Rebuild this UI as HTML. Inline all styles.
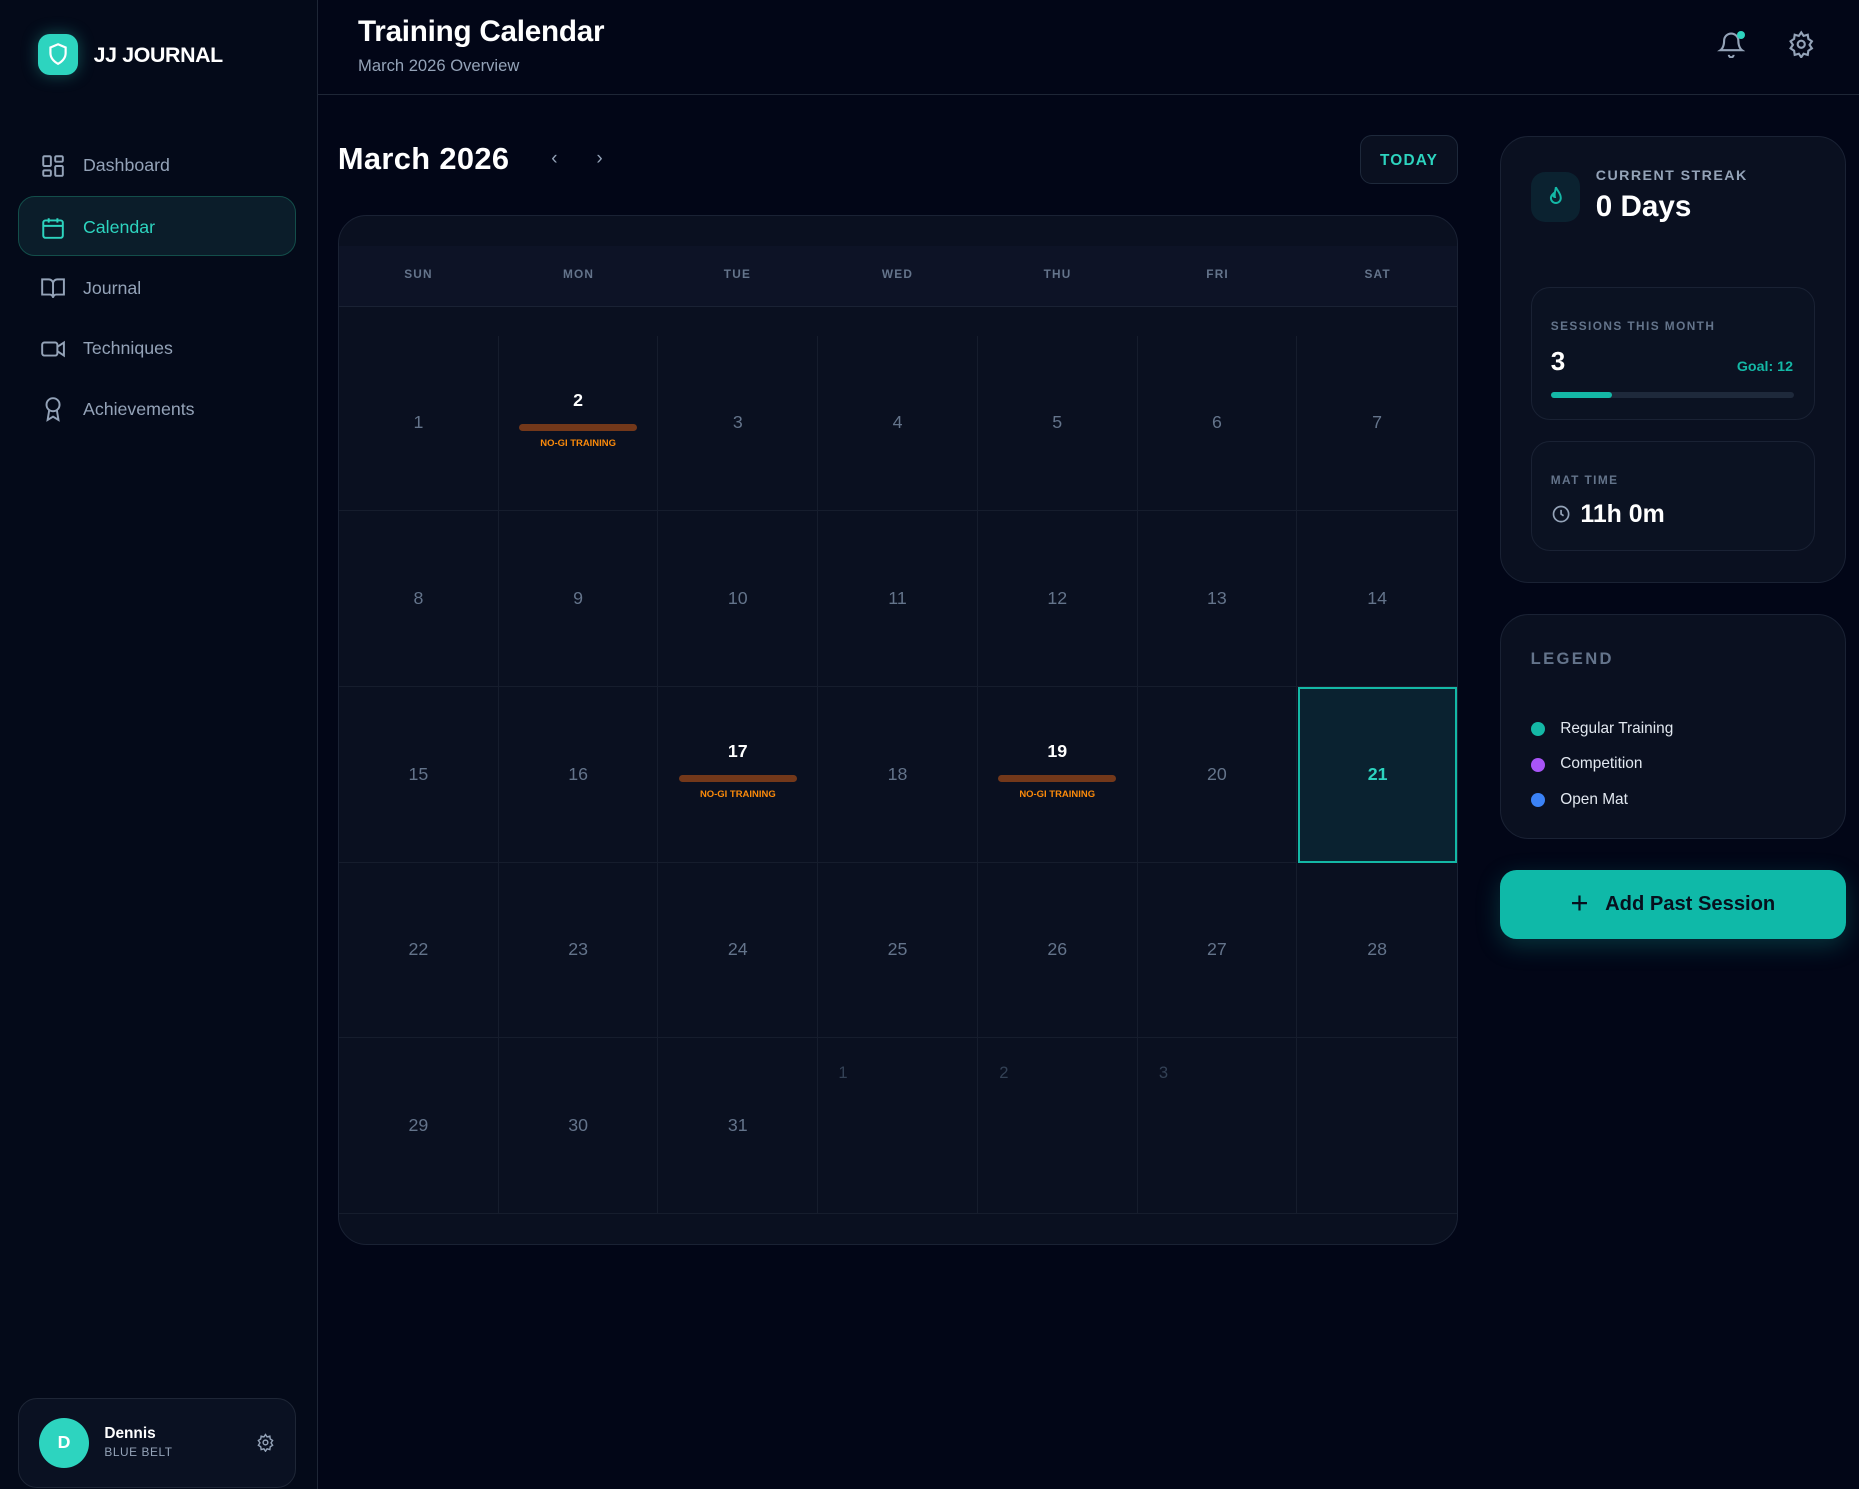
<!DOCTYPE html>
<html><head><meta charset="utf-8"><style>
*{box-sizing:border-box;margin:0;padding:0}
html,body{width:1859px;height:1489px;overflow:hidden;background:#020617}
#w{zoom:1.18559;width:1568px;height:1256px;position:relative;font-family:"Liberation Sans",sans-serif;color:#fff;background:#020617}
.a{position:absolute}
.side{left:0;top:0;width:268px;height:1256px;background:#040a19;border-right:1px solid #1e2636}
.nav{left:34px;display:flex;align-items:center;gap:14px;font-size:15px;color:#94a3b8;height:24px}
.nav svg{width:22px;height:22px;flex:none}
.card{background:#0a1020;border:1px solid #1a2234}
.cell{position:absolute;width:134.7px;height:148.2px;border-right:1px solid #161d2d;border-bottom:1px solid #161d2d;display:flex;align-items:center;justify-content:center;font-size:15px;color:#64748b}
.ev{flex-direction:column}
.ev b{color:#fff;font-size:15px;margin-top:-6px}
.ev i{display:block;width:100px;height:6px;border-radius:3px;background:#73381a;margin-top:11px}
.ev span{font-size:8px;font-weight:bold;color:#fb8a0a;margin-top:6px}
.dn{position:absolute;top:231px;font-size:10px;font-weight:bold;letter-spacing:1px;color:#64748b;transform:translate(-50%,-50%)}
.lbl{font-size:10px;font-weight:bold;letter-spacing:1.2px;color:#64748b}
</style></head><body><div id="w">
<div class="a side"></div>
<div class="a" style="left:32px;top:29px;width:34px;height:34px;border-radius:10px;background:#2dd4bf;box-shadow:0 0 14px rgba(45,212,191,.35)"></div>
<svg class="a" style="left:38px;top:35px" width="22" height="22" viewBox="0 0 24 24" fill="none" stroke="#fff" stroke-width="2"><path d="M12 3l7 3v5c0 5-3.5 8-7 10-3.5-2-7-5-7-10V6z"/></svg>
<div class="a" style="left:79px;top:36px;font-size:18px;font-weight:bold;letter-spacing:-.3px">JJ JOURNAL</div>
<div class="a nav" style="top:128px"><svg viewBox="0 0 24 24" fill="none" stroke="#94a3b8" stroke-width="1.8"><rect x="3" y="3" width="7" height="9" rx="1"/><rect x="14" y="3" width="7" height="5" rx="1"/><rect x="14" y="12" width="7" height="9" rx="1"/><rect x="3" y="16" width="7" height="5" rx="1"/></svg>Dashboard</div>
<div class="a" style="left:15px;top:165px;width:235px;height:51px;border-radius:14px;background:#0b1d2a;border:1px solid #134e4a"></div>
<div class="a nav" style="top:180px;color:#2dd4bf"><svg viewBox="0 0 24 24" fill="none" stroke="#2dd4bf" stroke-width="1.8"><rect x="3" y="5" width="18" height="16" rx="2"/><path d="M3 10h18M8 3v4M16 3v4"/></svg>Calendar</div>
<div class="a nav" style="top:231px"><svg viewBox="0 0 24 24" fill="none" stroke="#94a3b8" stroke-width="1.8"><path d="M2 4h6a4 4 0 014 4v13a3 3 0 00-3-3H2zM22 4h-6a4 4 0 00-4 4v13a3 3 0 013-3h7z"/></svg>Journal</div>
<div class="a nav" style="top:282px"><svg viewBox="0 0 24 24" fill="none" stroke="#94a3b8" stroke-width="1.8"><rect x="2" y="6" width="14" height="12" rx="2"/><path d="M16 10l6-4v12l-6-4"/></svg>Techniques</div>
<div class="a nav" style="top:333px"><svg viewBox="0 0 24 24" fill="none" stroke="#94a3b8" stroke-width="1.8"><circle cx="12" cy="8" r="6"/><path d="M8.5 13L7 22l5-3 5 3-1.5-9"/></svg>Achievements</div>
<div class="a" style="left:15px;top:1179px;width:235px;height:76px;border-radius:16px;background:#0a1122;border:1px solid #1e2636"></div>
<div class="a" style="left:33px;top:1196px;width:42px;height:42px;border-radius:50%;background:#2dd4bf;color:#fff;font-weight:bold;font-size:15px;display:flex;align-items:center;justify-content:center">D</div>
<div class="a" style="left:88px;top:1202px;font-size:13px;font-weight:bold">Dennis</div>
<div class="a" style="left:88px;top:1219px;font-size:10px;color:#94a3b8;letter-spacing:.5px">BLUE BELT</div>
<svg class="a" style="left:216px;top:1209px" width="16" height="16" viewBox="0 0 24 24" fill="none" stroke="#94a3b8" stroke-width="1.8"><circle cx="12" cy="12" r="3"/><path d="M12 2l2 3 3.5-1 .5 3.5 3 2-2 3 2 3-3 2-.5 3.5-3.5-1-2 3-2-3-3.5 1-.5-3.5-3-2 2-3-2-3 3-2 .5-3.5 3.5 1z"/></svg>

<div class="a" style="left:268px;top:79px;width:1300px;height:1px;background:#1e2636"></div>
<div class="a" style="left:302px;top:13px;font-size:25px;font-weight:bold;letter-spacing:-.2px">Training Calendar</div>
<div class="a" style="left:302px;top:47px;font-size:14px;color:#94a3b8">March 2026 Overview</div>
<svg class="a" style="left:1448px;top:25px" width="24" height="24" viewBox="0 0 24 24" fill="none" stroke="#94a3b8" stroke-width="1.8"><path d="M6 9a6 6 0 0112 0c0 6 3 8 3 8H3s3-2 3-8M10 21a2 2 0 004 0"/></svg>
<div class="a" style="left:1465px;top:26px;width:7px;height:7px;border-radius:50%;background:#2dd4bf"></div>
<svg class="a" style="left:1507px;top:25px" width="24" height="24" viewBox="0 0 24 24" fill="none" stroke="#94a3b8" stroke-width="1.8"><circle cx="12" cy="12" r="3"/><path d="M12 2l2 3 3.5-1 .5 3.5 3 2-2 3 2 3-3 2-.5 3.5-3.5-1-2 3-2-3-3.5 1-.5-3.5-3-2 2-3-2-3 3-2 .5-3.5 3.5 1z"/></svg>

<div class="a" style="left:285px;top:119px;font-size:26px;font-weight:bold;letter-spacing:.3px">March 2026</div>
<div class="a" style="left:465px;top:125px;font-size:16px;color:#94a3b8">&#8249;</div>
<div class="a" style="left:503px;top:125px;font-size:16px;color:#94a3b8">&#8250;</div>
<div class="a" style="left:1147px;top:114px;width:83px;height:41px;border-radius:10px;border:1px solid #1e293b;background:#0a1020;color:#2dd4bf;font-size:13px;font-weight:bold;letter-spacing:1px;display:flex;align-items:center;justify-content:center;padding-top:2px">TODAY</div>

<div class="a card" style="left:285px;top:181px;width:945px;height:869px;border-radius:24px;overflow:hidden">
<div class="a" style="left:0;top:26px;width:945px;height:51px;background:#0d1326;border-bottom:1px solid #1a2234"></div>
</div>
<div class="dn" style="left:353px">SUN</div><div class="dn" style="left:488px">MON</div><div class="dn" style="left:622px">TUE</div><div class="dn" style="left:757px">WED</div><div class="dn" style="left:892px">THU</div><div class="dn" style="left:1027px">FRI</div><div class="dn" style="left:1162px">SAT</div>

<div class="cell" style="left:286px;top:283px">1</div>
<div class="cell ev" style="left:420.7px;top:283px"><b>2</b><i></i><span>NO-GI TRAINING</span></div>
<div class="cell" style="left:555.4px;top:283px">3</div>
<div class="cell" style="left:690.1px;top:283px">4</div>
<div class="cell" style="left:824.8px;top:283px">5</div>
<div class="cell" style="left:959.5px;top:283px">6</div>
<div class="cell" style="left:1094.2px;top:283px;border-right:none">7</div>
<div class="cell" style="left:286px;top:431.2px">8</div>
<div class="cell" style="left:420.7px;top:431.2px">9</div>
<div class="cell" style="left:555.4px;top:431.2px">10</div>
<div class="cell" style="left:690.1px;top:431.2px">11</div>
<div class="cell" style="left:824.8px;top:431.2px">12</div>
<div class="cell" style="left:959.5px;top:431.2px">13</div>
<div class="cell" style="left:1094.2px;top:431.2px;border-right:none">14</div>
<div class="cell" style="left:286px;top:579.4px">15</div>
<div class="cell" style="left:420.7px;top:579.4px">16</div>
<div class="cell ev" style="left:555.4px;top:579.4px"><b>17</b><i></i><span>NO-GI TRAINING</span></div>
<div class="cell" style="left:690.1px;top:579.4px">18</div>
<div class="cell ev" style="left:824.8px;top:579.4px"><b>19</b><i></i><span>NO-GI TRAINING</span></div>
<div class="cell" style="left:959.5px;top:579.4px">20</div>
<div class="cell" style="left:1095px;top:579.4px;width:134px;border:2px solid #14b8a6;background:#0a2230;color:#2dd4bf;font-weight:bold">21</div>
<div class="cell" style="left:286px;top:727.6px">22</div>
<div class="cell" style="left:420.7px;top:727.6px">23</div>
<div class="cell" style="left:555.4px;top:727.6px">24</div>
<div class="cell" style="left:690.1px;top:727.6px">25</div>
<div class="cell" style="left:824.8px;top:727.6px">26</div>
<div class="cell" style="left:959.5px;top:727.6px">27</div>
<div class="cell" style="left:1094.2px;top:727.6px;border-right:none">28</div>
<div class="cell" style="left:286px;top:875.8px">29</div>
<div class="cell" style="left:420.7px;top:875.8px">30</div>
<div class="cell" style="left:555.4px;top:875.8px">31</div>
<div class="cell" style="left:690.1px;top:875.8px;align-items:flex-start;justify-content:flex-start;padding:21px 0 0 17px;color:#334155;font-size:14px">1</div>
<div class="cell" style="left:824.8px;top:875.8px;align-items:flex-start;justify-content:flex-start;padding:21px 0 0 18px;color:#334155;font-size:14px">2</div>
<div class="cell" style="left:959.5px;top:875.8px;align-items:flex-start;justify-content:flex-start;padding:21px 0 0 18px;color:#334155;font-size:14px">3</div>
<div class="cell" style="left:1094.2px;top:875.8px;border-right:none"></div>

<div class="a card" style="left:1265px;top:115px;width:292px;height:377px;border-radius:24px"></div>
<div class="a" style="left:1291px;top:145px;width:42px;height:42px;border-radius:12px;background:#0b2230"></div>
<svg class="a" style="left:1302px;top:155px" width="20" height="22" viewBox="0 0 24 24" fill="none" stroke="#14b8a6" stroke-width="2"><path d="M12 2c1 3 5 6 5 11a5 5 0 01-10 0c0-2 1-3 2-4 0 2 1 3 2 3-1-4 1-7 1-10z"/></svg>
<div class="a" style="left:1346px;top:142px;font-size:12px;font-weight:bold;letter-spacing:1.2px;color:#94a3b8">CURRENT STREAK</div>
<div class="a" style="left:1346px;top:160px;font-size:25px;font-weight:bold">0 Days</div>
<div class="a card" style="left:1291px;top:242px;width:240px;height:112px;border-radius:16px;background:#0b1222"></div>
<div class="a lbl" style="left:1308px;top:269px">SESSIONS THIS MONTH</div>
<div class="a" style="left:1308px;top:292px;font-size:22px;font-weight:bold">3</div>
<div class="a" style="left:1465px;top:303px;font-size:12px;font-weight:bold;color:#14b8a6">Goal: 12</div>
<div class="a" style="left:1308px;top:331px;width:205px;height:5px;border-radius:3px;background:#1e293b"><div style="width:52px;height:5px;border-radius:3px;background:#14b8a6"></div></div>
<div class="a card" style="left:1291px;top:372px;width:240px;height:93px;border-radius:16px;background:#0b1222"></div>
<div class="a lbl" style="left:1308px;top:399px">MAT TIME</div>
<svg class="a" style="left:1308px;top:425px" width="17" height="17" viewBox="0 0 24 24" fill="none" stroke="#94a3b8" stroke-width="2"><circle cx="12" cy="12" r="9"/><path d="M12 7v5l3 2"/></svg>
<div class="a" style="left:1333px;top:422px;font-size:21px;font-weight:bold">11h 0m</div>

<div class="a card" style="left:1265px;top:518px;width:292px;height:190px;border-radius:24px"></div>
<div class="a" style="left:1291px;top:547px;font-size:14px;font-weight:bold;letter-spacing:2px;color:#64748b">LEGEND</div>
<div class="a" style="left:1291px;top:609px;width:12px;height:12px;border-radius:50%;background:#14b8a6"></div>
<div class="a" style="left:1316px;top:607px;font-size:13px;color:#e2e8f0">Regular Training</div>
<div class="a" style="left:1291px;top:639px;width:12px;height:12px;border-radius:50%;background:#a855f7"></div>
<div class="a" style="left:1316px;top:637px;font-size:13px;color:#e2e8f0">Competition</div>
<div class="a" style="left:1291px;top:669px;width:12px;height:12px;border-radius:50%;background:#3b82f6"></div>
<div class="a" style="left:1316px;top:667px;font-size:13px;color:#e2e8f0">Open Mat</div>

<div class="a" style="left:1265px;top:734px;width:292px;height:58px;border-radius:14px;background:#0fb9a8;box-shadow:0 6px 20px rgba(20,184,166,.25);display:flex;align-items:center;justify-content:center;gap:14px;color:#07101d;font-size:17px;font-weight:bold"><span style="font-size:26px;font-weight:normal;margin-top:-3px">+</span>Add Past Session</div>
</div></body></html>
